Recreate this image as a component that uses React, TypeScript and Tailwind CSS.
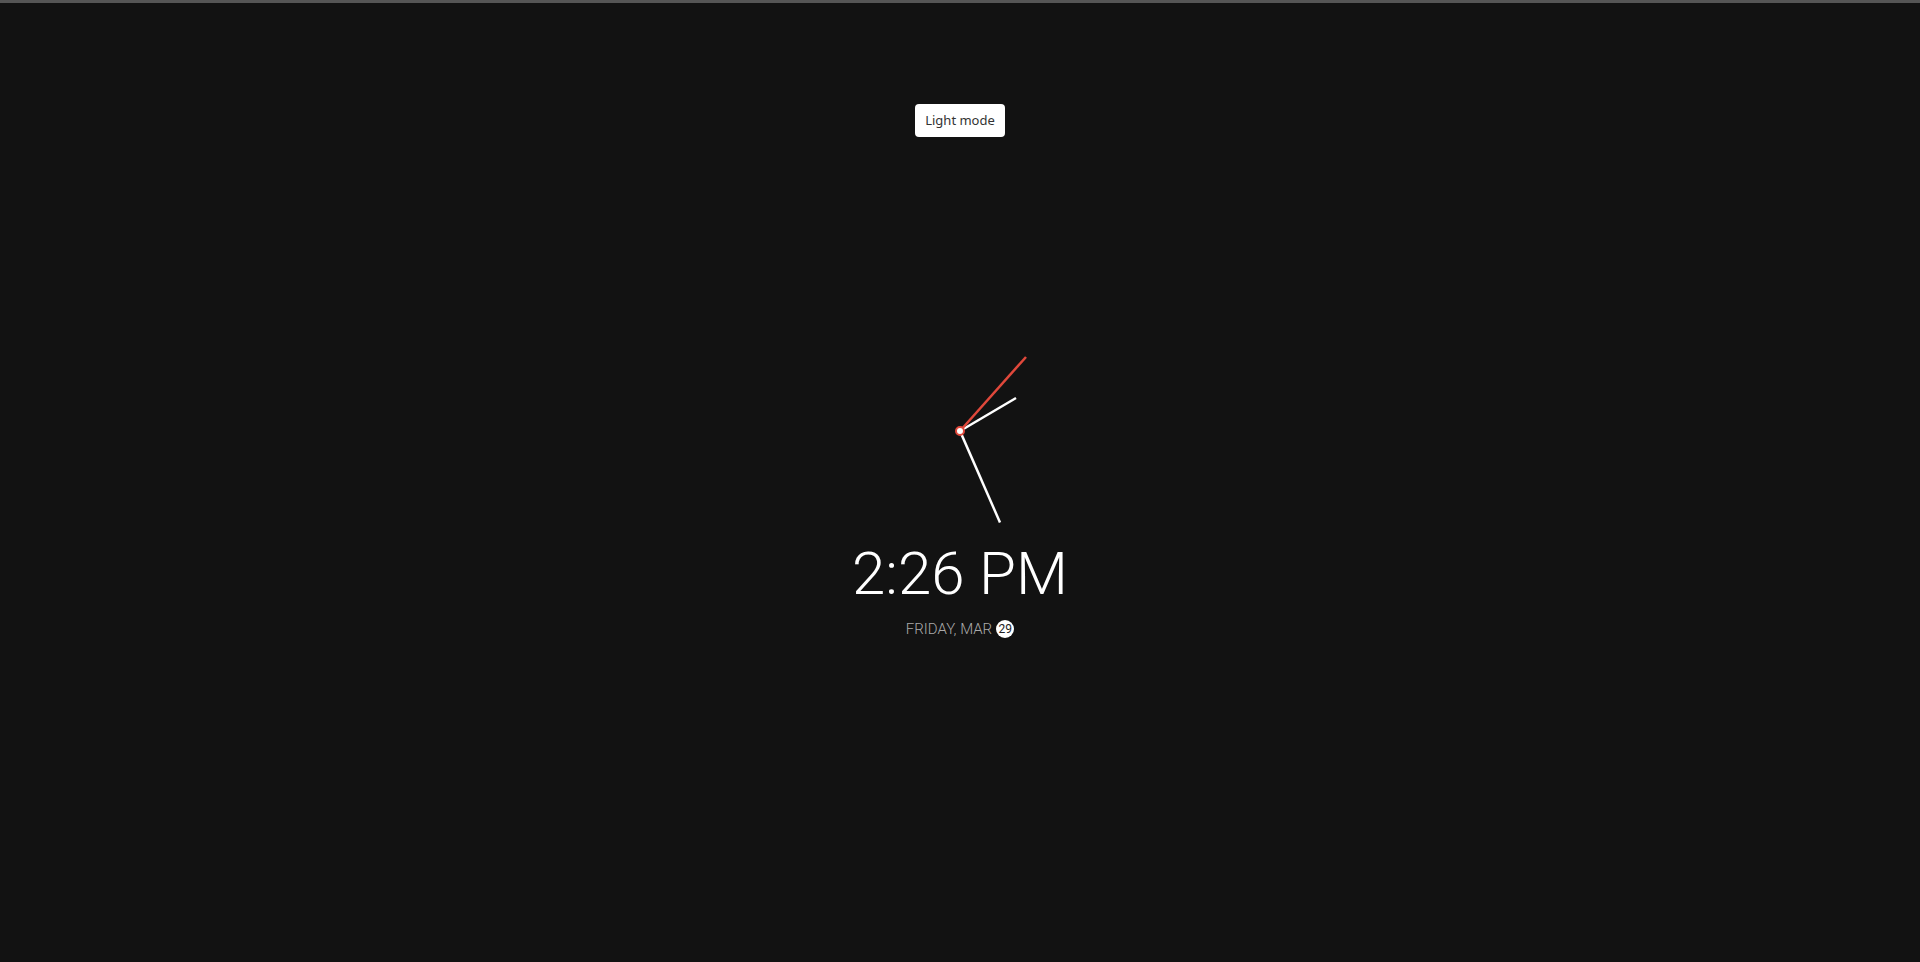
import React from 'react';

const Clock = () => {
  // center at (100,100), hand ends measured from the picture
  return (
    <svg width="200" height="200" viewBox="0 0 200 200">
      <line x1="100" y1="100" x2="140" y2="191.5" stroke="#ffffff" strokeWidth="2.5" />
      <line x1="100" y1="100" x2="156" y2="67" stroke="#ffffff" strokeWidth="2.5" />
      <line x1="100" y1="100" x2="166" y2="26" stroke="#e0483b" strokeWidth="2.5" />
      <circle cx="100" cy="100" r="4" fill="#ffffff" stroke="#e0483b" strokeWidth="2" />
    </svg>
  );
};

const App = () => {
  return (
    <div className="min-h-screen bg-[#121212] flex flex-col items-center">
      <div className="h-[3px] w-full bg-[#555555]" />
      <button className="mt-[101px] h-[33px] w-[90px] rounded-[4px] bg-white text-[13px] text-[#333] font-['Noto_Sans',sans-serif]">
        Light mode
      </button>
      <div className="mt-[194px]">
        <Clock />
      </div>
      <div className="mt-[13px] text-[60px] leading-none font-light text-white font-['Roboto',sans-serif]">
        2:26 PM
      </div>
      <div className="mt-[16px] flex items-center gap-[4px] font-['Roboto',sans-serif]">
        <span className="text-[15px] leading-none font-light text-[#aaaaaa] uppercase">Friday, Mar</span>
        <span className="flex h-[18px] w-[18px] items-center justify-center rounded-full bg-white text-[12px] leading-none text-[#222]">
          29
        </span>
      </div>
    </div>
  );
};

export default App;
